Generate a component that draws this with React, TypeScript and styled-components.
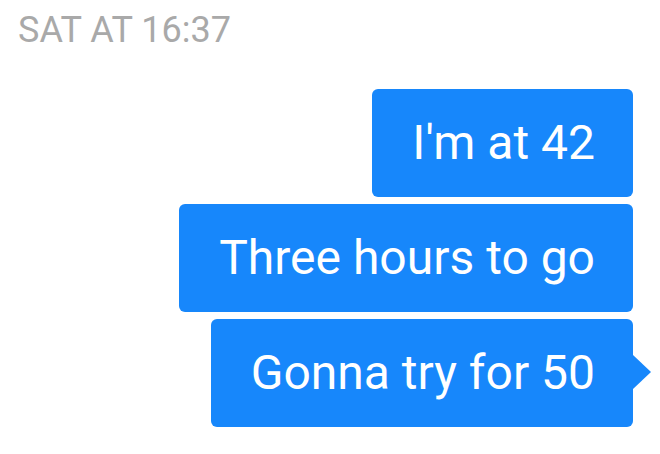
import { FC } from 'react';
import styled, { createGlobalStyle } from 'styled-components';

const GlobalStyle = createGlobalStyle`
    body {
        margin: 0;
        background: #ffffff;
        font-family: Roboto, 'Liberation Sans', sans-serif;
    }
`;

type BubbleProps = {
    hasTail?: boolean;
};

const messages = ["I'm at 42", 'Three hours to go', 'Gonna try for 50'];

const App: FC = () => {
    return (
        <>
            <GlobalStyle />
            <Thread>
                <Timestamp>SAT AT 16:37</Timestamp>
                <Messages>
                    {messages.map((text, i) => (
                        <Bubble key={text} hasTail={i === messages.length - 1}>
                            {text}
                        </Bubble>
                    ))}
                </Messages>
            </Thread>
        </>
    );
};

export default App;

const Thread = styled.div`
    display: flex;
    flex-direction: column;
    width: 660px;
    height: 454px;
    padding: 8px 27px 0 18px;
    box-sizing: border-box;
`;

const Timestamp = styled.div`
    color: #a9a9a9;
    font-size: 36px;
    line-height: 44px;
`;

const Messages = styled.div`
    display: flex;
    flex-direction: column;
    align-items: flex-end;
    gap: 7px;
    margin-top: 37px;
`;

const Bubble = styled.div<BubbleProps>`
    position: relative;
    background: #1787fb;
    color: #ffffff;
    font-size: 48px;
    line-height: 108px;
    height: 108px;
    padding: 0 38px 0 40px;
    border-radius: 6px;
    white-space: nowrap;

    &::after {
        content: '';
        display: ${({ hasTail }) => (hasTail ? 'block' : 'none')};
        position: absolute;
        right: -18px;
        top: 36px;
        border-top: 17px solid transparent;
        border-bottom: 17px solid transparent;
        border-left: 18px solid #1787fb;
    }
`;
